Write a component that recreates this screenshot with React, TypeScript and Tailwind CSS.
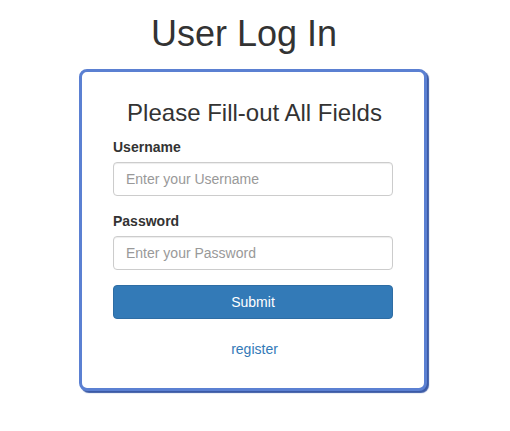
import React from "react";

export default function App() {
  return (
    <div
      className="w-[510px] h-[431px] bg-white text-[#333] text-[14px] leading-[20px]"
      style={{ fontFamily: '"Liberation Sans", Arial, Helvetica, sans-serif' }}
    >
      <div className="pt-[14px] pl-[151px]">
        <h1 className="text-[36px] leading-[40px] font-normal text-[#333] m-0">User Log In</h1>
      </div>
      <div className="pl-[79px] pt-[15px]">
        <div className="w-[348px] bg-white border-[3px] border-[#5b80d2] rounded-[8px] shadow-[2px_2px_1px_#3b5aa6] px-[31px] pt-[28px] pb-[29px]">
          <h3 className="text-[24px] leading-[26px] font-normal text-center text-[#333] m-0 -ml-[7px] -mr-[10px]">
            Please Fill-out All Fields
          </h3>
          <form className="mt-[11px]" onSubmit={(e) => e.preventDefault()}>
            <div className="mb-[15px]">
              <label className="block font-bold text-[14px] leading-[20px] mb-[5px]">Username</label>
              <input
                type="text"
                placeholder="Enter your Username"
                className="block w-full h-[34px] px-[12px] py-[6px] border border-[#ccc] rounded-[4px] text-[14px] text-[#555] placeholder:text-[#999] shadow-[inset_0_1px_1px_rgba(0,0,0,0.075)] outline-none"
              />
            </div>
            <div className="mb-[15px]">
              <label className="block font-bold text-[14px] leading-[20px] mb-[5px]">Password</label>
              <input
                type="password"
                placeholder="Enter your Password"
                className="block w-full h-[34px] px-[12px] py-[6px] border border-[#ccc] rounded-[4px] text-[14px] text-[#555] placeholder:text-[#999] shadow-[inset_0_1px_1px_rgba(0,0,0,0.075)] outline-none"
              />
            </div>
            <button
              type="submit"
              className="block w-full h-[34px] bg-[#337ab7] border border-[#2e6da4] rounded-[4px] text-white text-[14px] leading-[20px]"
            >
              Submit
            </button>
          </form>
          <div className="mt-[20px] text-center pl-[3px]">
            <a href="#" className="text-[#337ab7] no-underline">register</a>
          </div>
        </div>
      </div>
    </div>
  );
}
